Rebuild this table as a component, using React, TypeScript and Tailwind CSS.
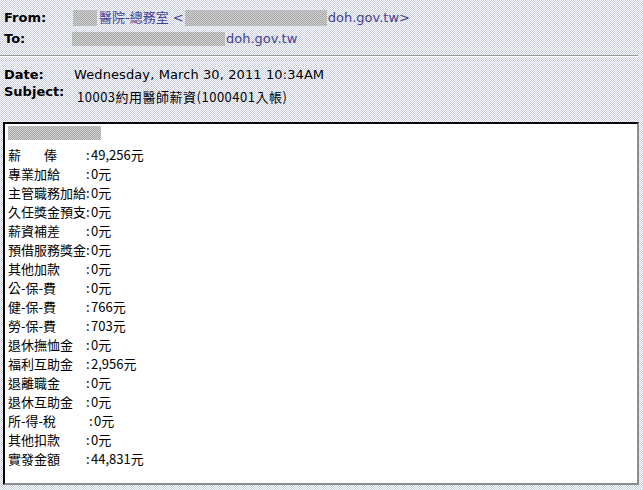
import React from "react";

const checker =
  "[background-image:repeating-conic-gradient(#c8cce0_0%_25%,#ffffff_0%_50%)] [background-size:2px_2px]";
const grayBlock =
  "[background-image:repeating-conic-gradient(#a6a6a6_0%_25%,#d2d2d2_0%_50%)] [background-size:2px_2px]";

type Row = { label: React.ReactNode; value: string; labelW?: number };

const rows: Row[] = [
  {
    label: (
      <span className="flex">
        <span>薪</span>
        <span className="ml-[23px]">俸</span>
      </span>
    ),
    value: "49,256元",
  },
  { label: "專業加給", value: "0元" },
  { label: "主管職務加給", value: "0元" },
  { label: "久任獎金預支", value: "0元" },
  { label: "薪資補差", value: "0元" },
  { label: "預借服務獎金", value: "0元" },
  { label: "其他加款", value: "0元" },
  { label: "公-保-費", value: "0元" },
  { label: "健-保-費", value: "766元" },
  { label: "勞-保-費", value: "703元" },
  { label: "退休撫恤金", value: "0元" },
  { label: "福利互助金", value: "2,956元" },
  { label: "退離職金", value: "0元" },
  { label: "退休互助金", value: "0元" },
  { label: "所-得-稅", value: "0元", labelW: 81 },
  { label: "其他扣款", value: "0元" },
  { label: "實發金額", value: "44,831元" },
];

export default function App() {
  return (
    <div
      className={`w-[643px] h-[490px] overflow-hidden ${checker} text-black text-[13px] font-['DejaVu_Sans',sans-serif]`}
    >
      {/* From */}
      <div className="flex items-center h-[17px] mt-[9px] pl-[4px]">
        <span className="w-[70px] font-bold">From:</span>
        <span className="flex items-center text-[#404090] whitespace-pre">
          <span className={`block ${grayBlock} w-[24px] h-[16px] ml-[-1px] mr-[2px]`} />
          <span className="font-['DejaVu_Sans','Noto_Sans_CJK_TC',sans-serif]">醫院-總務室 &lt;</span>
          <span className={`block ${grayBlock} w-[142px] h-[16px] ml-[1px] mr-[1px]`} />
          <span>doh.gov.tw&gt;</span>
        </span>
      </div>
      {/* To */}
      <div className="flex items-center h-[18px] mt-[4px] pl-[4px]">
        <span className="w-[70px] font-bold">To:</span>
        <span className="flex items-center text-[#404090]">
          <span className={`block ${grayBlock} w-[153px] h-[14px] ml-[-2px] mr-[1px]`} />
          <span>doh.gov.tw</span>
        </span>
      </div>
      {/* separator */}
      <div className="mt-[7px] w-[638px] h-px bg-[#9a9a9a]" />
      <div className="w-[638px] h-px bg-white" />
      {/* Date */}
      <div className="flex items-center h-[17px] mt-[9px] pl-[4px]">
        <span className="w-[70px] font-bold">Date:</span>
        <span className="tracking-[0.1px]">Wednesday, March 30, 2011 10:34AM</span>
      </div>
      {/* Subject */}
      <div className="flex items-start h-[23px] pl-[4px]">
        <span className="w-[70px] font-bold leading-[17px]">Subject:</span>
        <span className="mt-[5px] ml-[3px] leading-[17px] tracking-[0.5px] font-['Noto_Sans_CJK_TC',sans-serif]">
          10003約用醫師薪資(1000401入帳)
        </span>
      </div>
      {/* Body box */}
      <div className="mt-[16px] ml-[3px] w-[636px] h-[363px] bg-white border-t-2 border-l-2 border-black border-r-2 border-b-2 border-r-[#8c8c8c] border-b-[#8c8c8c] pt-[2px] pl-[3px] font-['Noto_Sans_CJK_TC',sans-serif] text-[13px]">
        <div className={`block ${grayBlock} w-[93px] h-[14px] mb-[5px]`} />
        {rows.map((r, i) => (
          <div key={i} className="flex h-[19px] leading-[19px] items-center whitespace-pre">
            <span style={{ width: r.labelW ?? 78 }} className="shrink-0">
              {r.label}
            </span>
            <span className="w-[5px] shrink-0">:</span>
            <span>{r.value}</span>
          </div>
        ))}
      </div>
    </div>
  );
}
